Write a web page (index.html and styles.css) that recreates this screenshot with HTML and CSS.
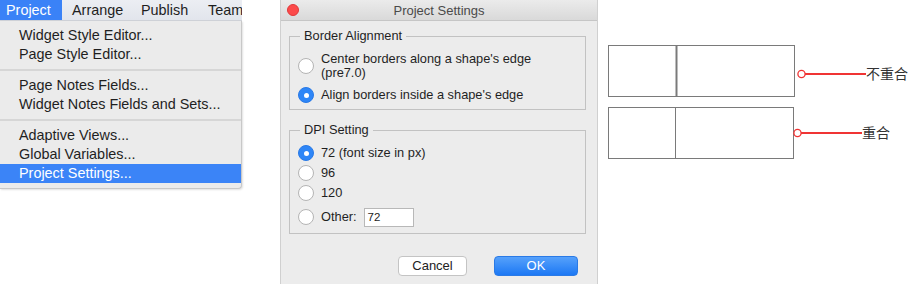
FILE: index.html
```html
<!DOCTYPE html>
<html>
<head>
<meta charset="utf-8">
<link rel="stylesheet" href="styles.css">
</head>
<body>
<div class="page">
  <div class="menu">
    <div class="menubar">
      <span class="mb-item active">Project</span>
      <span class="mb-item arrange">Arrange</span>
      <span class="mb-item publish">Publish</span>
      <span class="mb-item team">Team</span>
    </div>
    <div class="dropdown">
      <div class="mi">Widget Style Editor...</div>
      <div class="mi">Page Style Editor...</div>
      <div class="sep"></div>
      <div class="mi">Page Notes Fields...</div>
      <div class="mi">Widget Notes Fields and Sets...</div>
      <div class="sep"></div>
      <div class="mi">Adaptive Views...</div>
      <div class="mi">Global Variables...</div>
      <div class="mi selected">Project Settings...</div>
    </div>
  </div>

  <div class="dialog">
    <div class="titlebar">
      <span class="close"></span>
      <span class="title">Project Settings</span>
    </div>
    <div class="dbody">
      <fieldset class="group g1">
        <legend>Border Alignment</legend>
        <div class="opt first"><span class="radio"></span><span class="lbl">Center borders along a shape's edge<br>(pre7.0)</span></div>
        <div class="opt second"><span class="radio on"></span><span class="lbl">Align borders inside a shape's edge</span></div>
      </fieldset>
      <fieldset class="group g2">
        <legend>DPI Setting</legend>
        <div class="row"><span class="radio on"></span><span class="lbl">72 (font size in px)</span></div>
        <div class="row"><span class="radio"></span><span class="lbl">96</span></div>
        <div class="row"><span class="radio"></span><span class="lbl">120</span></div>
        <div class="row other"><span class="radio"></span><span class="lbl">Other:</span><span class="input">72</span></div>
      </fieldset>
      <div class="buttons">
        <span class="btn">Cancel</span>
        <span class="btn ok">OK</span>
      </div>
    </div>
  </div>

  <div class="diagram">
    <svg width="302" height="284" viewBox="608 0 302 284" xmlns="http://www.w3.org/2000/svg">
      <rect x="608.5" y="45.5" width="186" height="51" fill="#fff" stroke="#7a7a7a" stroke-width="1"/>
      <line x1="676.5" y1="45" x2="676.5" y2="97" stroke="#7a7a7a" stroke-width="2"/>
      <line x1="805" y1="74" x2="866" y2="74" stroke="#f03434" stroke-width="2"/>
      <circle cx="801.5" cy="74" r="3.6" fill="#fff" stroke="#f03434" stroke-width="1.3"/>
      <text x="866" y="79" class="zh">不重合</text>
      <rect x="608.5" y="107.5" width="185" height="51" fill="#fff" stroke="#7a7a7a" stroke-width="1"/>
      <line x1="675.5" y1="107" x2="675.5" y2="159" stroke="#7a7a7a" stroke-width="1"/>
      <line x1="801" y1="133" x2="862" y2="133" stroke="#f03434" stroke-width="2"/>
      <circle cx="797.5" cy="133" r="3.6" fill="#fff" stroke="#f03434" stroke-width="1.3"/>
      <text x="862" y="138" class="zh">重合</text>
    </svg>
  </div>
</div>
</body>
</html>
```
FILE: styles.css
```css
* { box-sizing: border-box; }
html, body { margin: 0; padding: 0; background: #fff; }
body {
  width: 910px;
  height: 284px;
  overflow: hidden;
  font-family: "Liberation Sans", Arial, sans-serif;
  color: #222;
}
.page {
  display: flex;
  align-items: flex-start;
  height: 284px;
}
.menu {
  width: 242px;
  flex: none;
}
.menubar {
  height: 21px;
  display: flex;
  background: linear-gradient(#eceef3, #e2e5ec);
  border-bottom: 1px solid #cfd2d8;
  font-size: 14.4px;
  white-space: nowrap;
  overflow: hidden;
}
.mb-item {
  line-height: 21px;
  color: #1e1e1e;
  flex: none;
}
.mb-item.active {
  background: #3a82f7;
  color: #fff;
  width: 62px;
  padding-left: 6px;
}
.arrange { width: 79px; padding-left: 10px; }
.publish { width: 67px; }
.team { width: 40px; }
.dropdown {
  background: #ebebeb;
  border-right: 1px solid #c8c8c8;
  border-bottom: 1px solid #c8c8c8;
  border-radius: 0 0 4px 0;
  padding: 5px 0 5px;
  font-size: 14.4px;
  box-shadow: 1px 1px 2px rgba(0,0,0,0.12);
}
.mi {
  height: 19px;
  line-height: 19px;
  padding-left: 19px;
  color: #1f1f1f;
}
.mi.selected { background: #3b84f7; color: #fff; }
.sep {
  height: 2px;
  margin: 5px 0 5px;
  background: #d6d6d6;
}
.dialog {
  margin-left: 38px;
  width: 318px;
  height: 284px;
  flex: none;
  background: #ececec;
  border-left: 1px solid #d0d0d0;
  border-right: 1px solid #d0d0d0;
  font-size: 12.8px;
  color: #1f1f1f;
  display: flex;
  flex-direction: column;
}
.titlebar {
  height: 21px;
  flex: none;
  background: linear-gradient(#ebebeb, #d9d9d9);
  border-bottom: 1px solid #c6c6c6;
  display: flex;
  align-items: center;
  justify-content: center;
  position: relative;
}
.close {
  position: absolute;
  left: 6px;
  top: 4px;
  width: 12px;
  height: 12px;
  border-radius: 50%;
  background: #fc4a4a;
  border: 1px solid #e0383a;
}
.title { font-size: 13px; color: #4a4a4a; }
.dbody {
  flex: 1;
  padding: 8px 11px 0 8px;
  display: flex;
  flex-direction: column;
}
.group {
  margin: 0;
  border: 1px solid #c2c2c2;
  padding: 0 0 0 8px;
  min-width: 0;
}
.group legend {
  padding: 0 4px;
  margin-left: 2px;
  font-size: 12.8px;
  line-height: 14px;
  height: 14px;
  color: #1f1f1f;
}
.g1 { height: 81px; }
.g2 { height: 111px; margin-top: 13px; }
.opt {
  display: flex;
  align-items: flex-start;
}
.lbl { line-height: 14px; }
.opt.first { margin-top: 9px; }
.opt.first .radio { margin-top: 6px; }
.opt.second { margin-top: 7px; align-items: center; }
.row {
  display: flex;
  align-items: center;
  height: 20px;
}
.row:first-of-type { margin-top: 6px; }
.row.other { height: 22px; margin-top: 3px; }
.radio {
  width: 16px;
  height: 16px;
  flex: none;
  border-radius: 50%;
  background: #fff;
  border: 1px solid #b4b4b4;
  margin-right: 7px;
  position: relative;
}
.radio.on {
  background: #2e86f7;
  border-color: #2a7ae6;
}
.radio.on::after {
  content: "";
  position: absolute;
  left: 4.5px;
  top: 4.5px;
  width: 5px;
  height: 5px;
  border-radius: 50%;
  background: #fff;
}
.input {
  margin-left: 7px;
  width: 50px;
  height: 19px;
  background: #fff;
  border: 1px solid #b8b8b8;
  font-size: 11.5px;
  line-height: 17px;
  padding-left: 3px;
}
.buttons {
  display: flex;
  justify-content: flex-end;
  gap: 27px;
  margin-top: 22px;
  padding-right: 8px;
}
.btn {
  width: 69px;
  height: 20px;
  line-height: 18px;
  text-align: center;
  background: #fff;
  border: 1px solid #c4c4c4;
  border-radius: 4px;
  font-size: 13px;
  color: #222;
}
.btn.ok {
  width: 84px;
  background: linear-gradient(#56a1fb, #1c78f4);
  border-color: #2a7ae6;
  color: #fff;
}
.diagram {
  margin-left: 10px;
  width: 302px;
  flex: none;
}
.diagram svg { display: block; }
.zh {
  font-family: "Noto Sans CJK SC", sans-serif;
  font-size: 14px;
  fill: #333;
}
```
